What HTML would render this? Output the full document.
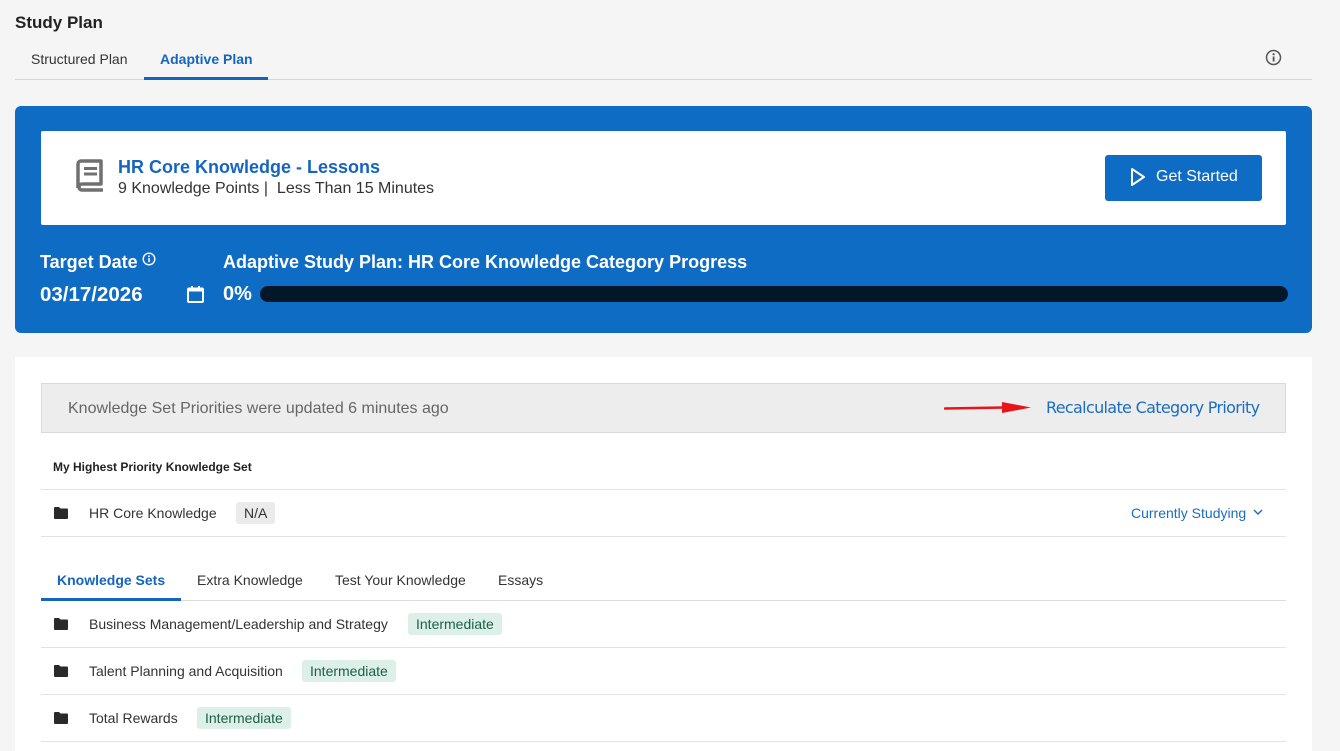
<!DOCTYPE html>
<html><head><meta charset="utf-8"><style>
*{margin:0;padding:0;box-sizing:border-box}
body{width:1340px;height:751px;background:#f5f5f5;font-family:"Liberation Sans",Arial,sans-serif;position:relative;overflow:hidden;color:#222}
.a{position:absolute;white-space:nowrap}
.badge{position:absolute;height:22px;line-height:22px;padding:0 8px;border-radius:3px;font-size:14px}
.int{background:#ddf0e8;color:#1b5e45}
.line{position:absolute;left:41px;width:1245px;height:1px;background:#e3e3e3}
.fold{position:absolute;left:54px;width:14px;height:12px}
.rowt{position:absolute;left:89px;font-size:14px;color:#333}
</style></head><body>
<div class="a" style="left:15px;top:13px;font-size:17px;font-weight:bold;color:#222">Study Plan</div>
<div class="a" style="left:31px;top:51px;font-size:14px;color:#333">Structured Plan</div>
<div class="a" style="left:160px;top:51px;font-size:14px;font-weight:bold;color:#1565c0">Adaptive Plan</div>
<div class="a" style="left:15px;top:79px;width:1297px;height:1px;background:#d6d6d6"></div>
<div class="a" style="left:144px;top:77px;width:124px;height:3px;background:#1565c0"></div>
<svg class="a" style="left:1265px;top:49px" width="17" height="17" viewBox="0 0 17 17"><circle cx="8.5" cy="8.5" r="7" fill="none" stroke="#555" stroke-width="1.5"/><rect x="7.7" y="7.5" width="1.8" height="5" fill="#555"/><circle cx="8.6" cy="5.2" r="1.1" fill="#555"/></svg>

<div class="a" style="left:15px;top:106px;width:1297px;height:227px;background:#0f6cc5;border-radius:6px"></div>
<div class="a" style="left:41px;top:131px;width:1245px;height:94px;background:#fff;border-radius:2px"></div>
<svg class="a" style="left:75px;top:159px" width="30" height="34" viewBox="0 0 30 34"><path d="M3 29V5a3 3 0 0 1 3-3h20v23H7a3 3 0 0 0 0 6h21" fill="none" stroke="#707070" stroke-width="3.5" stroke-linejoin="round"/><rect x="9" y="8" width="13" height="3" fill="#707070"/><rect x="9" y="13.5" width="13" height="3" fill="#707070"/></svg>
<div class="a" style="left:118px;top:157px;font-size:18px;font-weight:bold;color:#1565c0">HR Core Knowledge - Lessons</div>
<div class="a" style="left:118px;top:180px;font-size:16px;color:#333">9 Knowledge Points |&nbsp; Less Than 15 Minutes</div>
<div class="a" style="left:1105px;top:155px;width:157px;height:46px;background:#0f6cc5;border-radius:3px"></div>
<svg class="a" style="left:1130px;top:167px" width="16" height="20" viewBox="0 0 16 20"><path d="M2 2L14 10L2 18Z" fill="none" stroke="#fff" stroke-width="2" stroke-linejoin="round"/></svg>
<div class="a" style="left:1156px;top:168px;font-size:16px;color:#fff">Get Started</div>

<div class="a" style="left:40px;top:252px;font-size:18px;font-weight:bold;color:#fff">Target Date</div>
<svg class="a" style="left:142px;top:252px" width="14" height="14" viewBox="0 0 14 14"><circle cx="7" cy="7" r="5.8" fill="none" stroke="#fff" stroke-width="1.4"/><rect x="6.3" y="6" width="1.5" height="4.2" fill="#fff"/><circle cx="7" cy="4.2" r="0.9" fill="#fff"/></svg>
<div class="a" style="left:40px;top:283px;font-size:20.5px;font-weight:bold;color:#fff">03/17/2026</div>
<svg class="a" style="left:186px;top:285px" width="19" height="19" viewBox="0 0 19 19"><rect x="2" y="3.5" width="15" height="13.5" rx="1" fill="none" stroke="#fff" stroke-width="2"/><rect x="2" y="3.5" width="15" height="3" fill="#fff"/><rect x="5" y="1" width="2" height="3" fill="#fff"/><rect x="12" y="1" width="2" height="3" fill="#fff"/></svg>
<div class="a" style="left:223px;top:252px;font-size:18px;font-weight:bold;color:#fff">Adaptive Study Plan: HR Core Knowledge Category Progress</div>
<div class="a" style="left:223px;top:283px;font-size:20px;font-weight:bold;color:#fff">0%</div>
<div class="a" style="left:260px;top:286px;width:1028px;height:16px;background:#03172b;border-radius:8px"></div>

<div class="a" style="left:15px;top:357px;width:1297px;height:394px;background:#fff"></div>
<div class="a" style="left:41px;top:383px;width:1245px;height:50px;background:#ededed;border:1px solid #d9d9d9"></div>
<div class="a" style="left:68px;top:399px;font-size:16px;color:#666;line-height:20px">Knowledge Set Priorities were updated 6 minutes ago</div>
<svg class="a" style="left:944px;top:401px" width="88" height="14" viewBox="0 0 88 14"><path d="M1 7.5L60 6.5" stroke="#e8141a" stroke-width="2.5" stroke-linecap="round"/><path d="M58 1L87 6.5L58 12Z" fill="#e8141a"/></svg>
<div class="a" style="left:1046px;top:398px;font-size:16px;color:#1a6dc0;font-family:'DejaVu Sans','Liberation Sans',sans-serif;letter-spacing:-0.67px">Recalculate Category Priority</div>

<div class="a" style="left:53px;top:460px;font-size:12px;font-weight:bold;color:#222">My Highest Priority Knowledge Set</div>
<div class="line" style="top:489px"></div>
<svg class="fold" style="top:507px" viewBox="0 0 14 12"><path d="M0 1a1 1 0 0 1 1-1h4l1.5 1.5H13a1 1 0 0 1 1 1V11a1 1 0 0 1-1 1H1a1 1 0 0 1-1-1Z" fill="#2a2a2a"/></svg>
<div class="rowt" style="top:505px">HR Core Knowledge</div>
<div class="badge" style="left:236px;top:502px;background:#ebebeb;color:#333">N/A</div>
<div class="a" style="left:1131px;top:505px;font-size:14px;color:#1a6dc0">Currently Studying</div>
<svg class="a" style="left:1253px;top:508px" width="10" height="8" viewBox="0 0 10 8"><path d="M1 2l4 4 4-4" fill="none" stroke="#1a6dc0" stroke-width="1.4"/></svg>
<div class="line" style="top:536px"></div>

<div class="a" style="left:57px;top:572px;font-size:14px;font-weight:bold;color:#1565c0">Knowledge Sets</div>
<div class="a" style="left:197px;top:572px;font-size:14px;color:#333">Extra Knowledge</div>
<div class="a" style="left:335px;top:572px;font-size:14px;color:#333">Test Your Knowledge</div>
<div class="a" style="left:498px;top:572px;font-size:14px;color:#333">Essays</div>
<div class="line" style="top:600px;background:#dcdcdc"></div>
<div class="a" style="left:41px;top:598px;width:140px;height:3px;background:#1565c0"></div>

<svg class="fold" style="top:618px" viewBox="0 0 14 12"><path d="M0 1a1 1 0 0 1 1-1h4l1.5 1.5H13a1 1 0 0 1 1 1V11a1 1 0 0 1-1 1H1a1 1 0 0 1-1-1Z" fill="#2a2a2a"/></svg>
<div class="rowt" style="top:616px">Business Management/Leadership and Strategy</div>
<div class="badge int" style="left:408px;top:613px">Intermediate</div>
<div class="line" style="top:647px"></div>
<svg class="fold" style="top:665px" viewBox="0 0 14 12"><path d="M0 1a1 1 0 0 1 1-1h4l1.5 1.5H13a1 1 0 0 1 1 1V11a1 1 0 0 1-1 1H1a1 1 0 0 1-1-1Z" fill="#2a2a2a"/></svg>
<div class="rowt" style="top:663px">Talent Planning and Acquisition</div>
<div class="badge int" style="left:302px;top:660px">Intermediate</div>
<div class="line" style="top:694px"></div>
<svg class="fold" style="top:712px" viewBox="0 0 14 12"><path d="M0 1a1 1 0 0 1 1-1h4l1.5 1.5H13a1 1 0 0 1 1 1V11a1 1 0 0 1-1 1H1a1 1 0 0 1-1-1Z" fill="#2a2a2a"/></svg>
<div class="rowt" style="top:710px">Total Rewards</div>
<div class="badge int" style="left:197px;top:707px">Intermediate</div>
<div class="line" style="top:741px"></div>
</body></html>
